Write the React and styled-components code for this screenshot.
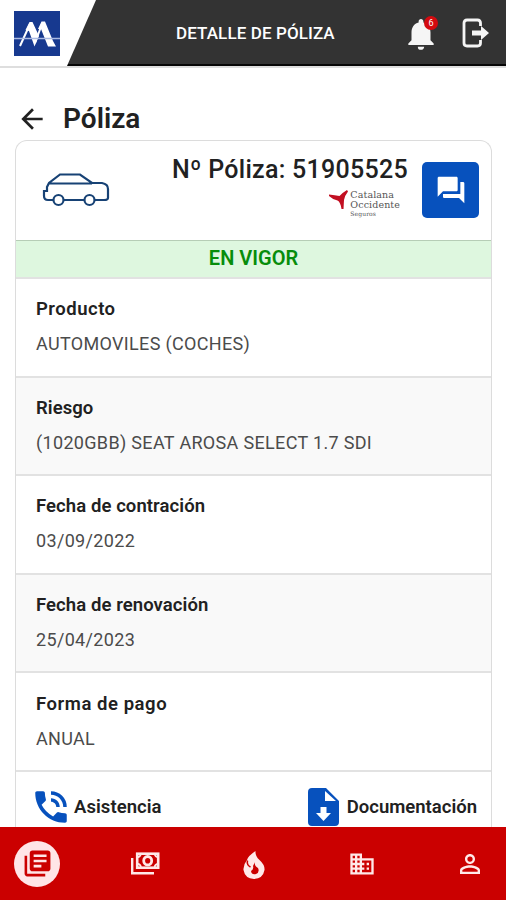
import styled, { createGlobalStyle } from "styled-components";
import {
  MdNotifications,
  MdArrowBack,
  MdForum,
  MdPhoneInTalk,
  MdLibraryBooks,
  MdDomain,
  MdPersonOutline,
} from "react-icons/md";

const GlobalStyle = createGlobalStyle`
  * {
    box-sizing: border-box;
  }
  body {
    margin: 0;
    background: #fff;
    font-family: Roboto, "Liberation Sans", sans-serif;
    color: #212121;
  }
`;

const Screen = styled.div`
  height: 900px;
  display: flex;
  flex-direction: column;
  overflow: hidden;
`;

const TopBar = styled.header`
  flex: none;
  height: 66px;
  display: flex;
  align-items: center;
  background: linear-gradient(to bottom, #333 64px, #060606 64px);
`;

const LogoCorner = styled.div`
  width: 96px;
  height: 66px;
  flex: none;
  padding: 11px 0 0 14px;
  background: #fff;
  clip-path: polygon(0 0, 100% 0, 67px 100%, 0 100%);
`;

const TopTitle = styled.h1`
  flex: 1;
  margin: 0;
  padding-left: 80px;
  font-size: 17px;
  font-weight: 500;
  line-height: 20px;
  letter-spacing: 0.1px;
  color: #fff;
  white-space: nowrap;
`;

const TopActions = styled.div`
  display: flex;
  align-items: center;
  gap: 22px;
  padding-right: 16px;
  color: #f5f5f5;

  svg {
    display: block;
  }
`;

const BellWrap = styled.div`
  position: relative;
  padding-top: 2px;
`;

const Badge = styled.span`
  position: absolute;
  top: 3px;
  right: 2px;
  width: 14px;
  height: 14px;
  border-radius: 50%;
  background: #d40a0f;
  font-size: 9px;
  line-height: 14px;
  text-align: center;
  color: #fff;
`;

const Content = styled.main`
  flex: 1;
  min-height: 0;
  overflow: hidden;
  padding: 32px 14px 0 15px;
  border-top: 2px solid #dedede;
`;

const PageHeading = styled.div`
  display: flex;
  align-items: center;
  height: 38px;
  padding-left: 1px;
  gap: 15px;
`;

const Heading = styled.h2`
  margin: 0;
  font-size: 28px;
  font-weight: 600;
  line-height: 34px;
`;

const Card = styled.section`
  border: 1px solid #dcdcdc;
  border-radius: 12px 12px 0 0;
  border-bottom: 0;
  margin-top: 2px;
  height: 760px;
  overflow: hidden;
`;

const CardHeader = styled.div`
  display: flex;
  align-items: flex-start;
  height: 99px;
  padding: 0 12px 0 26px;
`;

const Vehicle = styled.div`
  padding-top: 31px;
`;

const PolicyInfo = styled.div`
  flex: 1;
  display: flex;
  flex-direction: column;
  align-items: flex-end;
  padding: 14px 14px 0 0;
`;

const PolicyNumber = styled.div`
  font-size: 25px;
  font-weight: 500;
  line-height: 30px;
  letter-spacing: 0.28px;
  white-space: nowrap;
`;

const Insurer = styled.div`
  display: flex;
  gap: 2px;
  margin: 5px 8px 0 0;
`;

const InsurerName = styled.div`
  font-family: "DejaVu Serif", serif;
  font-size: 9.5px;
  line-height: 10px;
  letter-spacing: 0.1px;
  color: #555;

  small {
    display: block;
    font-size: 6px;
    line-height: 8px;
  }
`;

const ChatButton = styled.button`
  width: 57px;
  height: 56px;
  margin-top: 21px;
  padding: 0;
  border: 0;
  border-radius: 5px;
  display: flex;
  align-items: center;
  justify-content: center;
  background: #0751bd;
  color: #fff;
`;

const Status = styled.div`
  height: 37px;
  border-top: 1px solid #b6cdb6;
  background: #def7df;
  font-size: 20px;
  font-weight: 600;
  line-height: 35px;
  text-align: center;
  color: #078d0b;
`;

const Row = styled.div`
  height: ${({ $height }) => $height}px;
  padding: ${({ $top = 18 }) => $top}px 20px 0;
  border-top: 2px solid #e2e2e2;
  background: ${({ $shaded }) => ($shaded ? "#f9f9f9" : "#fff")};
`;

const Label = styled.div`
  font-size: 18.5px;
  font-weight: 600;
  line-height: 24px;
  letter-spacing: ${({ $spacing }) => $spacing}px;
`;

const Value = styled.div`
  margin-top: 11px;
  font-size: 18px;
  line-height: 24px;
  letter-spacing: 0.33px;
  color: #4b4b4b;
`;

const Actions = styled.div`
  display: flex;
  justify-content: space-between;
  border-top: 2px solid #e2e2e2;
  padding: 14px 14px 0 14px;
`;

const Action = styled.div`
  display: flex;
  align-items: center;
  gap: ${({ $gap }) => $gap}px;
  height: 42px;
  font-size: 18.5px;
  font-weight: 600;
  letter-spacing: ${({ $spacing }) => $spacing}px;

  svg {
    color: #0751bd;
  }
`;

const BottomNav = styled.nav`
  flex: none;
  height: 73px;
  display: flex;
  align-items: center;
  justify-content: space-between;
  padding: 0 13px 0 14px;
  background: #cb0000;
`;

const NavItem = styled.div`
  width: 46px;
  height: 46px;
  border-radius: 50%;
  display: flex;
  align-items: center;
  justify-content: center;
  background: ${({ $active }) => ($active ? "#ffe5e7" : "transparent")};
  color: ${({ $active }) => ($active ? "#cb0000" : "#ffe9e9")};
`;

const LogoMark = () => (
  <svg width="46" height="45" viewBox="0 0 46 45">
    <rect width="46" height="45" fill="#17398f" />
    <path d="M6 35 16 13M21 32 28 13" fill="none" stroke="#fff" strokeWidth="2" />
    <path d="M11.500 19 15.500 11H18.500L25 25 20.500 35.500 15 20ZM24 18 27.500 10.500H31L39 30 42 35.500H34L27 18Z" fill="#fff" />
    <path d="M0 27.500H46" stroke="#a9b9e2" strokeWidth="1.4" />
  </svg>
);

const ExitIcon = () => (
  <svg width="28" height="30" viewBox="0 0 28 30" fill="none">
    <path
      d="M18.500 8V5Q18.500 2 15.500 2H5Q2 2 2 5V25Q2 28 5 28H15.500Q18.500 28 18.500 25V22"
      stroke="#f5f5f5"
      strokeWidth="2.800"
    />
    <path d="M10 12.500H19V8L27 15 19 22V17.500H10Z" fill="#f5f5f5" />
  </svg>
);

const CarIcon = () => (
  <svg width="68" height="35" viewBox="0 0 68 35" fill="none" stroke="#174275" strokeWidth="2.2">
    <path d="M11 28H6Q2 28 2 24V19H5V15L7 11 18 2.500H38L50 11H60Q66 12 66 17V26Q66 28 62 28H53M42 28H22M6 11.500H50" />
    <circle cx="16.500" cy="28" r="5" />
    <circle cx="47.500" cy="28" r="5" />
  </svg>
);

const InsurerMark = () => (
  <svg width="19" height="20" viewBox="0 0 19 20" fill="#c20f22">
    <path d="M0 4.500Q6 5 10.500 6Q13 3 18 0L19 1.500Q15.500 6 15 10L14.500 19H12.500Q11.500 12 8.500 10.500Q3 9 0 6Z" />
  </svg>
);

const FileDownIcon = () => (
  <svg width="31" height="38" viewBox="0 0 31 38">
    <path
      d="M4 0H18L31 13V34Q31 38 27 38H4Q0 38 0 34V4Q0 0 4 0ZM17 3V13H28ZM12.500 19V25H8L15.500 33 23 25H18.500V19Z"
      fill="currentColor"
      fillRule="evenodd"
    />
  </svg>
);

const CashIcon = () => (
  <svg width="30" height="23" viewBox="-1 0 30 23" fill="none" stroke="currentColor">
    <path d="M1.200 6V21.200H23" strokeWidth="2.400" />
    <rect x="6.200" y="1.700" width="21" height="14" strokeWidth="2.600" />
    <path d="M7 5Q9 5 10 2M23.500 2Q24.500 5 27 5M7 12Q9 12 10 15M23.500 15Q24.500 12 27 12" strokeWidth="1.800" />
    <ellipse cx="16.700" cy="8.700" rx="4" ry="4.200" strokeWidth="2.800" />
  </svg>
);

const FlameIcon = () => (
  <svg width="22" height="30" viewBox="0 -2 22 30">
    <path
      d="M12.500 0Q12 5 16.500 9Q22 14 21.500 19Q20 27.500 11 28Q2 27.500 0.500 19Q0 14 4 9Q5 5 12.500 0Z"
      fill="currentColor"
    />
    <path d="M4.500 9.500Q3.500 14 7.500 16" fill="none" stroke="#cb0000" strokeWidth="1.500" />
    <path d="M12 11Q11 15 15 17Q17 21 13 23Q8.500 24 8 20Q11 18 10 15Z" fill="#cb0000" />
  </svg>
);

const rows = [
  { label: "Producto", value: "AUTOMOVILES (COCHES)", height: 99, spacing: 0.5 },
  { label: "Riesgo", value: "(1020GBB) SEAT AROSA SELECT 1.7 SDI", height: 98, spacing: 0.05 },
  { label: "Fecha de contración", value: "03/09/2022", height: 99, spacing: 0.08 },
  { label: "Fecha de renovación", value: "25/04/2023", height: 98, spacing: 0.08 },
  { label: "Forma de pago", value: "ANUAL", height: 99, spacing: 0.55, top: 19 },
];

export default function App() {
  return (
    <Screen>
      <GlobalStyle />
      <TopBar>
        <LogoCorner>
          <LogoMark />
        </LogoCorner>
        <TopTitle>DETALLE DE PÓLIZA</TopTitle>
        <TopActions>
          <BellWrap>
            <MdNotifications size={38} />
            <Badge>6</Badge>
          </BellWrap>
          <ExitIcon />
        </TopActions>
      </TopBar>

      <Content>
        <PageHeading>
          <MdArrowBack size={32} />
          <Heading>Póliza</Heading>
        </PageHeading>

        <Card>
          <CardHeader>
            <Vehicle>
              <CarIcon />
            </Vehicle>
            <PolicyInfo>
              <PolicyNumber>Nº Póliza: 51905525</PolicyNumber>
              <Insurer>
                <InsurerMark />
                <InsurerName>
                  Catalana
                  <br />
                  Occidente
                  <small>Seguros</small>
                </InsurerName>
              </Insurer>
            </PolicyInfo>
            <ChatButton>
              <MdForum size={32} />
            </ChatButton>
          </CardHeader>
          <Status>EN VIGOR</Status>
          {rows.map((row, i) => (
            <Row key={row.label} $height={row.height} $top={row.top} $shaded={i % 2 === 1}>
              <Label $spacing={row.spacing}>{row.label}</Label>
              <Value>{row.value}</Value>
            </Row>
          ))}
          <Actions>
            <Action $gap={2} $spacing={0.05}>
              <MdPhoneInTalk size={42} />
              Asistencia
            </Action>
            <Action $gap={8} $spacing={0}>
              <FileDownIcon />
              Documentación
            </Action>
          </Actions>
        </Card>
      </Content>

      <BottomNav>
        <NavItem $active>
          <MdLibraryBooks size={31} />
        </NavItem>
        <NavItem>
          <CashIcon />
        </NavItem>
        <NavItem>
          <FlameIcon />
        </NavItem>
        <NavItem>
          <MdDomain size={28} />
        </NavItem>
        <NavItem>
          <MdPersonOutline size={30} />
        </NavItem>
      </BottomNav>
    </Screen>
  );
}
